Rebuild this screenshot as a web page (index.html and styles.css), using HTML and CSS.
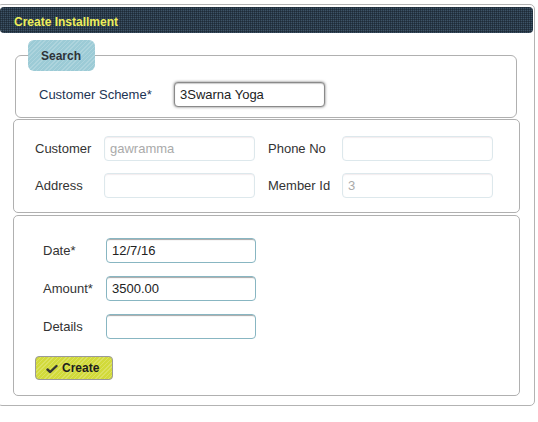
FILE: index.html
```html
<!DOCTYPE html>
<html>
<head>
<meta charset="utf-8">
<link rel="stylesheet" href="styles.css">
</head>
<body>
<div class="panel">
  <div class="header"><span class="title">Create Installment</span></div>
  <fieldset class="search">
    <legend class="legend">Search</legend>
    <div class="search-row">
      <label class="scheme-label">Customer Scheme*</label>
      <input class="scheme-input" type="text" value="3Swarna Yoga">
    </div>
  </fieldset>
  <div class="box info">
    <label class="lbl">Customer</label>
    <input class="ro" type="text" value="gawramma">
    <label class="lbl lbl-right">Phone No</label>
    <input class="ro" type="text" value="">
    <label class="lbl">Address</label>
    <input class="ro" type="text" value="">
    <label class="lbl lbl-right">Member Id</label>
    <input class="ro" type="text" value="3">
  </div>
  <div class="box form">
    <div class="form-grid">
      <label class="lbl">Date*</label>
      <input class="ed" type="text" value="12/7/16">
      <label class="lbl">Amount*</label>
      <input class="ed" type="text" value="3500.00">
      <label class="lbl">Details</label>
      <input class="ed" type="text" value="">
    </div>
    <button class="create" type="button">
      <svg class="check" width="12" height="10" viewBox="0 0 12 10"><path d="M1.5 5.5 L4.2 8 L10.5 2" fill="none" stroke="#333" stroke-width="2.4" stroke-linecap="round" stroke-linejoin="round"/></svg>
      <span>Create</span>
    </button>
  </div>
</div>
</body>
</html>
```

FILE: styles.css
```css
html, body {
  margin: 0;
  padding: 0;
  background: #ffffff;
}
body {
  padding-top: 4px;
  font-family: "Liberation Sans", Arial, sans-serif;
  font-size: 13px;
  color: #333;
}
.panel {
  width: 533px;
  margin-left: -3px;
  border: 1px solid #b3b3b3;
  border-radius: 5px;
  padding: 2px 1px 9px 2px;
}
.header {
  height: 26px;
  border-radius: 4px;
  background-color: #3d5366;
  background-image:
    linear-gradient(90deg, rgba(20,30,40,0.5) 1px, transparent 1px),
    linear-gradient(rgba(20,30,40,0.5) 1px, transparent 1px);
  background-size: 2px 2px;
  display: flex;
  align-items: center;
  padding: 3px 0 0 14px;
  box-sizing: border-box;
}
.title {
  font-weight: bold;
  font-size: 12px;
  color: #eeee5a;
}
.search {
  margin: 7px 16px 0 15px;
  padding: 0 0 10px 0;
  border: 1px solid #b0b0b0;
  border-radius: 6px;
  min-width: 0;
}
.legend {
  margin-left: 12px;
  padding: 0 13px;
  height: 31px;
  line-height: 32px;
  box-sizing: border-box;
  width: 67px;
  border-radius: 6px;
  background-color: #9ccbd6;
  background-image: repeating-linear-gradient(135deg, rgba(255,255,255,0.18) 0 1px, transparent 1px 3px);
  font-weight: bold;
  font-size: 12px;
  color: #2e3338;
}
.search-row {
  display: flex;
  align-items: center;
  margin-top: 11px;
  padding-left: 23px;
}
.scheme-label {
  width: 135px;
  color: #1c3454;
}
input {
  font-family: "Liberation Sans", Arial, sans-serif;
  font-size: 13px;
  box-sizing: border-box;
  margin: 0;
  outline: none;
  padding: 0 5px;
}
.scheme-input {
  width: 151px;
  height: 25px;
  border: 1px solid #8a8a8a;
  border-radius: 4px;
  box-shadow: 0 0 3px rgba(0,0,0,0.55), inset 0 1px 1px rgba(0,0,0,0.2);
  color: #222;
  background: #fff;
}
.box {
  margin: 1px 13px 0 13px;
  border: 1px solid #b0b0b0;
  border-radius: 5px;
}
.info {
  display: grid;
  grid-template-columns: 69px 151px 87px 151px;
  row-gap: 12px;
  align-items: center;
  padding: 16px 0 14px 21px;
}
.lbl {
  color: #333;
}
.lbl-right {
  padding-left: 13px;
}
.ro {
  height: 25px;
  border: 1px solid #dde8ec;
  border-radius: 4px;
  background: #fff;
  color: #aaa;
  box-shadow: inset 0 1px 1px rgba(220,200,210,0.35);
}
.form {
  margin-top: 2px;
  padding: 22px 0 15px 21px;
}
.form-grid {
  display: grid;
  grid-template-columns: 63px 150px;
  row-gap: 13px;
  align-items: center;
  padding-left: 8px;
}
.ed {
  height: 25px;
  border: 1px solid #88b6c2;
  border-radius: 4px;
  background: #fff;
  color: #222;
  box-shadow: inset 0 2px 1px -1px rgba(0,0,0,0.35);
}
.create {
  margin-top: 17px;
  width: 78px;
  height: 24px;
  border: 1px solid #9a9a9a;
  border-radius: 4px;
  background-color: #d2da3a;
  background-image: repeating-linear-gradient(135deg, rgba(255,255,255,0.2) 0 1px, transparent 1px 3px);
  display: flex;
  align-items: center;
  padding: 0 0 0 10px;
  gap: 4px;
  font-family: "Liberation Sans", Arial, sans-serif;
  font-weight: bold;
  font-size: 12px;
  color: #1e1e1e;
  cursor: pointer;
}
.check {
  display: block;
  margin-top: 1px;
}
```
